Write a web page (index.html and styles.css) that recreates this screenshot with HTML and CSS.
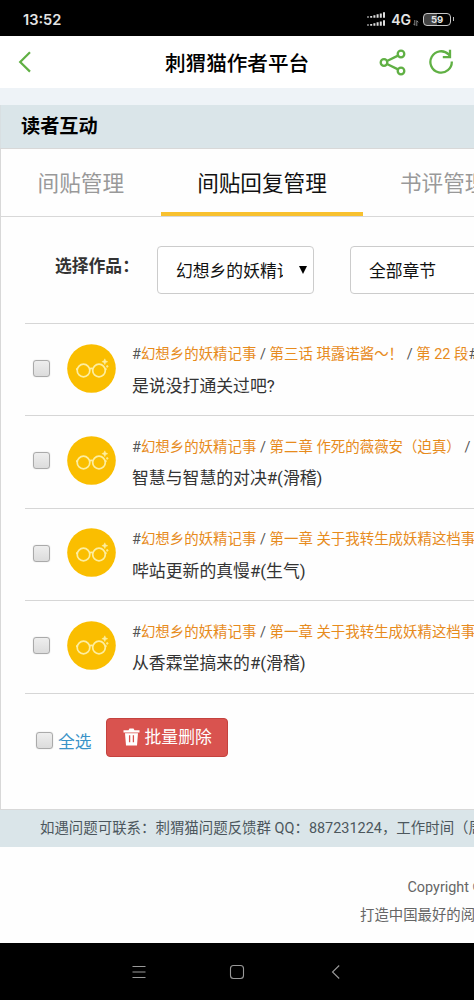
FILE: index.html
```html
<!DOCTYPE html>
<html lang="zh-CN">
<head>
<meta charset="utf-8">
<meta name="viewport" content="width=device-width, initial-scale=1">
<title>刺猬猫作者平台</title>
<link rel="stylesheet" href="styles.css">
</head>
<body>
<svg width="0" height="0" class="defs">
  <symbol id="glasses" viewBox="0 0 49 49">
    <circle cx="24.5" cy="24.5" r="24.3" fill="#fabe00"/>
    <g fill="none" stroke="#fdeea0" stroke-width="1.7">
      <circle cx="16.5" cy="26.5" r="6.3"/>
      <circle cx="32" cy="26.5" r="6.3"/>
      <path d="M22.5 25q1.8-1.2 3.5 0M10.3 25.2H9M38.2 25.2h1.4"/>
    </g>
    <path d="M37.8 14.8l.9 2 2 .9-2 .9-.9 2-.9-2-2-.9 2-.9zM40.2 21.2l.4.8.8.4-.8.4-.4.8-.4-.8-.8-.4.8-.4z" fill="#fdeea0" stroke="#fdeea0" stroke-width=".5"/>
  </symbol>
</svg>
<div class="screen">
  <div class="status">
    <span class="time">13:52</span>
    <svg class="signal" width="19" height="15" viewBox="0 0 19 15" fill="#ddd"><path d="M0 4.5h2v1H0zM3.2 4h2v1.8h-2zM6.4 3.2h2v2.6h-2zM9.6 2.3h2v3.5h-2zM12.8 1.4h2v4.4h-2zM16 .3h2v5.5h-2zM0 12.5h2v1H0zM3.2 12h2v1.8h-2zM6.4 11.2h2v2.6h-2zM9.6 10.3h2v3.5h-2zM12.8 9.4h2v4.4h-2zM16 8.3h2v5.5h-2z"/></svg>
    <span class="net">4G</span>
    <svg class="arrows" width="6" height="6" viewBox="0 0 6 6" fill="none" stroke="#aaa" stroke-width=".8"><path d="M1.8 0v5.3L.3 3.7M3.8 6V.7l1.5 1.6"/></svg>
    <span class="battery">59</span>
  </div>
  <header class="appbar">
    <svg class="back" width="14" height="22" viewBox="0 0 14 22" fill="none" stroke="#60b044" stroke-width="2.2"><path d="M12 1.3L2.2 11 12 20.6"/></svg>
    <h1>刺猬猫作者平台</h1>
    <svg class="share" width="28" height="27" viewBox="0 0 28 27" fill="none" stroke="#60b044" stroke-width="2.3"><circle cx="5" cy="13.5" r="3.3"/><circle cx="22" cy="5" r="3.3"/><circle cx="22" cy="22" r="3.3"/><path d="M8 12l11-5.4M8 15l11 5.4"/></svg>
    <svg class="reload" width="26" height="26" viewBox="0 0 26 26" fill="none" stroke="#60b044" stroke-width="2.3"><path d="M23.8 12.5A10.7 10.7 0 1 1 20.7 5.4L22 7.6M22 .8v7.3h-7.2"/></svg>
  </header>
  <main class="page">
    <h2 class="section">读者互动</h2>
    <div class="panel">
      <nav class="tabs">
        <a>间贴管理</a><a class="active">间贴回复管理</a><a>书评管理</a>
      </nav>
      <div class="filters">
        <label>选择作品：</label>
        <div class="select work"><span>幻想乡的妖精记事</span><i></i></div>
        <div class="select chapter"><span>全部章节</span></div>
      </div>
      <ul class="list">
        <li><b class="check"></b><svg class="avatar"><use href="#glasses"/></svg>
          <div class="body"><p class="ref">#<a>幻想乡的妖精记事</a> / <a>第三话 琪露诺酱～！</a> / <a>第 22 段</a>#</p><p class="msg">是说没打通关过吧?</p></div></li>
        <li><b class="check"></b><svg class="avatar"><use href="#glasses"/></svg>
          <div class="body"><p class="ref">#<a>幻想乡的妖精记事</a> / <a>第二章 作死的薇薇安（迫真）</a> /</p><p class="msg">智慧与智慧的对决#(滑稽)</p></div></li>
        <li><b class="check"></b><svg class="avatar"><use href="#glasses"/></svg>
          <div class="body"><p class="ref">#<a>幻想乡的妖精记事</a> / <a>第一章 关于我转生成妖精这档事</a></p><p class="msg">哔站更新的真慢#(生气)</p></div></li>
        <li><b class="check"></b><svg class="avatar"><use href="#glasses"/></svg>
          <div class="body"><p class="ref">#<a>幻想乡的妖精记事</a> / <a>第一章 关于我转生成妖精这档事</a></p><p class="msg">从香霖堂搞来的#(滑稽)</p></div></li>
      </ul>
      <div class="actions">
        <b class="check"></b><a class="all">全选</a>
        <button class="delete"><svg width="17" height="18" viewBox="0 0 17 18"><path d="M.5 2.2h5L6.5.6h4l1 1.6h5v2.2H.5zM2 5.2h13l-1 12.2H3z" fill="#fff"/><path d="M6.6 7.2v7M10.4 7.2v7" stroke="#d9534f" stroke-width="1.3"/></svg>批量删除</button>
      </div>
    </div>
    <div class="notice">如遇问题可联系：刺猬猫问题反馈群 QQ：887231224，工作时间（周</div>
    <footer class="foot"><p class="copy">Copyright ©</p><p class="slogan">打造中国最好的阅读</p></footer>
  </main>
  <div class="navbar">
    <svg width="16" height="16" viewBox="0 0 16 16"><path d="M1.5 2.5h13M1.5 8h13M1.5 13.5h13"/></svg>
    <svg width="16" height="16" viewBox="0 0 16 16"><rect x="1.5" y="1.5" width="13" height="13" rx="3"/></svg>
    <svg width="16" height="16" viewBox="0 0 16 16"><path d="M11.2 1.5L4.5 8l6.7 6.5"/></svg>
  </div>
</div>
</body>
</html>
```
FILE: styles.css
```css
* { box-sizing: border-box; }
body, h1, h2, p, ul { margin: 0; padding: 0; }
body { font-family: Roboto, "Noto Sans CJK SC", sans-serif; background: #fff; }
.defs { position: absolute; }
.screen { width: 474px; height: 1000px; overflow: hidden; display: flex; flex-direction: column; }
.screen > * { flex: none; }
svg { display: block; flex: none; }

.status { height: 36px; background: #000; color: #e4e4e4; display: flex; align-items: center; padding: 3px 22px 0 23px; }
.time { font: 600 14.6px/20px Inter, sans-serif; margin-right: auto; }
.signal { margin-right: 5px; }
.net { font: 600 14px/20px Inter, sans-serif; }
.arrows { margin: 7px 4px 0 2px; }
.battery { width: 28px; height: 13px; border: 1.5px solid #c8c8c8; border-radius: 4px; background: linear-gradient(90deg, #444 50%, #000 50%); font: 700 9.5px/12px Inter, sans-serif; text-align: center; position: relative; margin-right: 1px; }
.battery::after { content: ""; position: absolute; right: -4px; top: 3px; width: 1.5px; height: 4px; background: #bbb; }

.appbar { height: 52px; display: flex; align-items: center; padding: 0 20px 0 18px; }
.appbar h1 { font-size: 20.6px; font-weight: 500; line-height: 30px; color: #000; margin-left: 133px; margin-right: auto; padding-top: 3px; white-space: nowrap; }
.share { margin-right: 21px; }

.page { height: 855px; background: #eef3f7; padding-top: 17px; }
.section { height: 43px; background: #dae5e9; border-left: 1px solid #d8dfe2; font-size: 19.2px; line-height: 43px; font-weight: 700; color: #000; padding-left: 20px; }
.panel { height: 662px; background: #fefefe; border: solid #d8d8d8; border-width: 1px 0 1px 1px; }
.tabs { height: 68px; display: flex; border-bottom: 1px solid #d8d8d8; font-size: 21.6px; line-height: 69px; color: #999; white-space: nowrap; overflow: hidden; }
.tabs a { flex: none; padding: 0 36.6px; height: 68px; }
.tabs .active { color: #111; border-bottom: 5px solid #f8c12f; }

.filters { display: flex; padding: 29px 0 0 54px; height: 106px; }
.filters label { font-size: 16.8px; font-weight: 700; line-height: 41px; color: #333; width: 102px; flex: none; white-space: nowrap; }
.select { height: 48px; border: 1px solid #ccc; border-radius: 4px; background: #fff; font-size: 16.8px; line-height: 48px; color: #111; display: flex; padding-left: 18px; flex: none; }
.select span { white-space: nowrap; overflow: hidden; }
.work { width: 157px; }
.work span { width: 107px; flex: none; }
.work i { border: solid transparent; border-width: 8px 4px 0; border-top-color: #000; height: 0; margin: 19px 0 0 16px; }
.chapter { width: 157px; margin-left: 36px; }

.list { list-style: none; margin-left: 24px; border-top: 1px solid #d6d6d6; }
.list li { height: 92.4px; border-bottom: 1px solid #d6d6d6; display: flex; padding-left: 8px; }
.check { width: 17px; height: 17px; border: 1px solid #aaa; border-radius: 3px; background: linear-gradient(#eee, #dcdcdc); flex: none; box-shadow: 0 0 1px #bbb; }
.list .check { margin-top: 36px; }
.avatar { width: 49px; height: 49px; margin: 19.5px 0 0 17px; }
.body { margin-left: 16px; white-space: nowrap; }
.ref { font-size: 14.45px; line-height: 22px; margin-top: 20.4px; color: #555; }
.ref a { color: #e78b1c; }
.msg { font-size: 16.85px; line-height: 26px; margin-top: 6.6px; color: #333; }
.actions { display: flex; padding: 24px 0 0 35px; }
.actions .check { margin-top: 14px; }
.all { color: #3a93c8; font-size: 16.8px; line-height: 26px; margin: 11px 0 0 5px; }
.delete { width: 122px; height: 39px; margin-left: 14px; padding: 0 0 0 16px; display: flex; align-items: center; gap: 5px; color: #fff; background: #d9534f; border: 1px solid #c4423e; border-radius: 4px; font: 16.8px/24px Roboto, "Noto Sans CJK SC", sans-serif; white-space: nowrap; }

.notice { height: 37px; background: #dae5e9; color: #4c575d; font-size: 14.45px; line-height: 38px; padding-left: 40px; white-space: nowrap; overflow: hidden; }
.foot { height: 96px; background: #fefefe; color: #666; font-size: 14.4px; line-height: 27.5px; padding-top: 27px; white-space: nowrap; overflow: hidden; }
.copy { padding-left: 407.5px; }
.slogan { padding-left: 360px; }

.navbar { height: 57px; background: #000; display: flex; justify-content: center; align-items: center; gap: 82.5px; }
.navbar svg { fill: none; stroke: #999; stroke-width: 1.1; }
```
